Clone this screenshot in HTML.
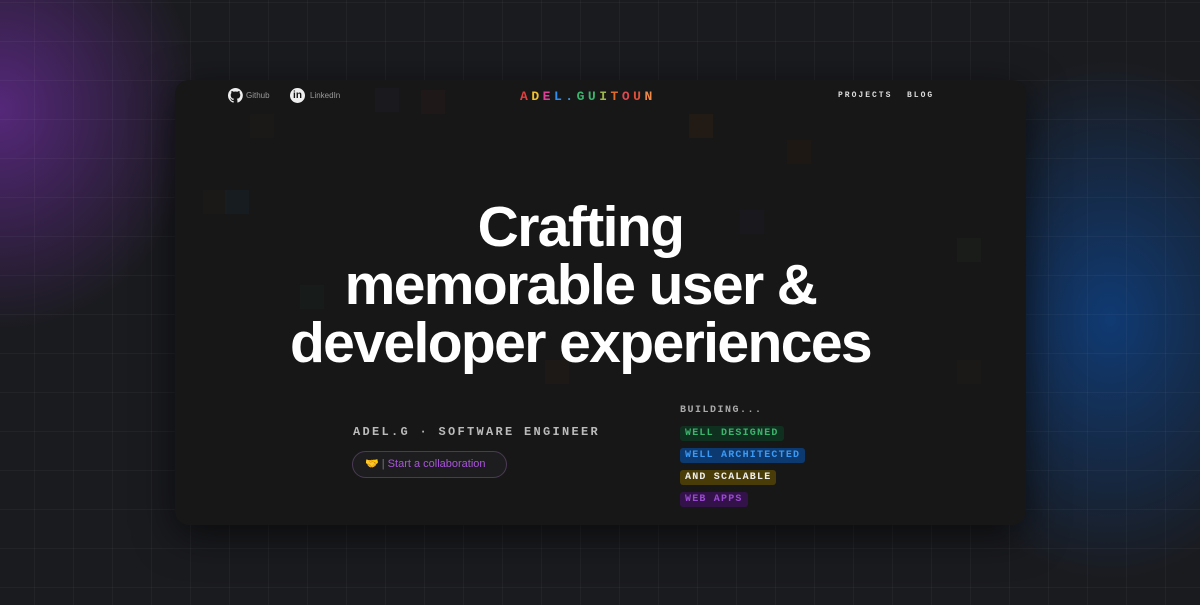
<!DOCTYPE html><html><head><style>
*{margin:0;padding:0;box-sizing:border-box}
body{width:1200px;height:605px;overflow:hidden;background:#1b1c20;font-family:"Liberation Sans",sans-serif;position:relative}
.bg{position:absolute;inset:0;background:
radial-gradient(ellipse 200px 220px at 0px 110px,rgba(110,45,160,.7),transparent),
radial-gradient(ellipse 200px 260px at 1110px 320px,rgba(10,75,160,.65),transparent),
#1a1b1f}
.grid{position:absolute;inset:0;background-image:linear-gradient(rgba(255,255,255,.035) 1px,transparent 1px),linear-gradient(90deg,rgba(255,255,255,.035) 1px,transparent 1px);background-size:39px 39px;background-position:-5px 2px}
.card{position:absolute;left:175px;top:80px;width:851px;height:445px;background:#171717;border-radius:14px;box-shadow:0 10px 40px rgba(0,0,0,.6);overflow:hidden}
.sq{position:absolute;width:24px;height:24px;opacity:.55}
.px{font-family:"Liberation Mono",monospace;font-weight:bold;text-transform:uppercase}
.nav a{position:absolute;color:#999;font-size:8px;text-decoration:none}
.ic{position:absolute;width:15px;height:15px;border-radius:50%;background:#eee}
h1{position:absolute;left:-20px;width:851px;top:118px;text-align:center;color:#fff;font-size:57px;line-height:58px;font-weight:bold;letter-spacing:-1.6px}
.tag{position:absolute;left:505px;font-size:10px;letter-spacing:1.2px;padding:2px 5px;border-radius:3px}
</style></head><body>
<div class="bg"></div><div class="grid"></div>
<div class="card">
<div class="sq" style="left:200px;top:8px;background:#1d1e24"></div>
<div class="sq" style="left:246px;top:10px;background:#241a1a"></div>
<div class="sq" style="left:75px;top:34px;background:#1e1b17"></div>
<div class="sq" style="left:514px;top:34px;background:#2a1d14"></div>
<div class="sq" style="left:612px;top:60px;background:#241a14"></div>
<div class="sq" style="left:28px;top:110px;background:#1e1c18"></div>
<div class="sq" style="left:50px;top:110px;background:#18202a"></div>
<div class="sq" style="left:565px;top:130px;background:#1c1c22"></div>
<div class="sq" style="left:125px;top:205px;background:#18201f"></div>
<div class="sq" style="left:782px;top:158px;background:#1d201c"></div>
<div class="sq" style="left:370px;top:280px;background:#221c16"></div>
<div class="sq" style="left:782px;top:280px;background:#1f1c18"></div>
<div class="nav">
<svg style="position:absolute;left:53px;top:8px" width="15" height="15" viewBox="0 0 16 16"><path fill="#eee" d="M8 0a8 8 0 0 0-2.5 15.6c.4 0 .5-.2.5-.4v-1.5c-2.2.5-2.7-1-2.7-1-.4-.9-.9-1.2-.9-1.2-.7-.5.1-.5.1-.5.8.1 1.2.8 1.2.8.7 1.3 1.9.9 2.3.7.1-.5.3-.9.5-1.1-1.8-.2-3.6-.9-3.6-4 0-.9.3-1.6.8-2.1-.1-.2-.4-1 .1-2.1 0 0 .7-.2 2.2.8a7.4 7.4 0 0 1 4 0c1.5-1 2.2-.8 2.2-.8.4 1.1.2 1.9.1 2.1.5.6.8 1.3.8 2.1 0 3.1-1.9 3.8-3.7 4 .3.3.6.8.6 1.5v2.2c0 .2.1.5.6.4A8 8 0 0 0 8 0z"/></svg>
<a style="left:71px;top:11px">Github</a>
<div class="ic" style="left:115px;top:8px;color:#111;font-size:10px;font-weight:bold;text-align:center;line-height:15px">in</div>
<a style="left:135px;top:11px">LinkedIn</a>
<div class="px" style="position:absolute;left:345px;top:9px;font-size:13px;letter-spacing:3.5px"><span style="color:#e0403f">A</span><span style="color:#f2c12e">D</span><span style="color:#e0409a">E</span><span style="color:#2d8ff0">L</span><span style="color:#3b8ed8">.</span><span style="color:#3cb46e">G</span><span style="color:#3cb46e">U</span><span style="color:#9bb84a">I</span><span style="color:#e06a2a">T</span><span style="color:#e04850">O</span><span style="color:#e0503a">U</span><span style="color:#f08a4a">N</span></div>
<div class="px" style="position:absolute;left:663px;top:11px;font-size:8px;letter-spacing:2px;color:#ddd">Projects</div>
<div class="px" style="position:absolute;left:732px;top:11px;font-size:8px;letter-spacing:2px;color:#ddd">Blog</div>
</div>
<h1>Crafting<br>memorable user &amp;<br>developer experiences</h1>
<div class="px" style="position:absolute;left:178px;top:345px;font-size:12px;letter-spacing:2.3px;color:#bbb">adel.g · software engineer</div>
<div style="position:absolute;left:177px;top:371px;width:155px;height:27px;border:1px solid #4a3a55;border-radius:14px;background:#1d1d20;font-size:11px;color:#a855d8;line-height:25px;padding-left:12px">🤝 <span style="color:#777">|</span> Start a collaboration</div>
<div class="px" style="position:absolute;left:505px;top:325px;font-size:10px;letter-spacing:1.5px;color:#aaa">Building...</div>
<div class="tag px" style="top:346px;background:#10301f;color:#3cb46e">Well designed</div>
<div class="tag px" style="top:368px;background:#0c3a70;color:#3a9af5">Well architected</div>
<div class="tag px" style="top:390px;background:#4a3c08;color:#eee">And scalable</div>
<div class="tag px" style="top:412px;background:#33124a;color:#9a4ad0">Web apps</div>
</div>
</body></html>
